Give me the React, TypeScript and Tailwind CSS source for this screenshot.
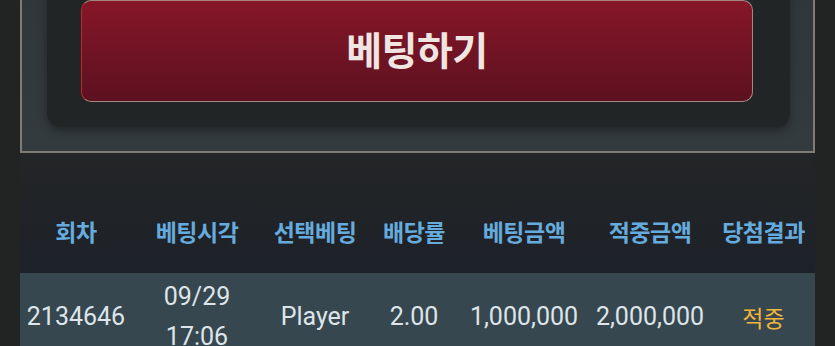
import React from "react";

const cols = ["w-[112px]", "w-[130px]", "w-[106px]", "w-[92px]", "w-[128px]", "w-[124px]", "w-[103px]"];
const headers = ["회차", "베팅시각", "선택베팅", "배당률", "베팅금액", "적중금액", "당첨결과"];

export default function App() {
  return (
    <div className="min-h-[346px] w-[835px] overflow-hidden bg-[#222424]" style={{ fontFamily: "Roboto, 'Noto Sans CJK KR', sans-serif" }}>
      <div className="ml-[20px] mt-[-52px] w-[795px] border-2 border-[#7f7b75] bg-gradient-to-b from-[#2f363a] to-[#343b3f] pb-[24px] pl-[25px] pr-[23px] pt-[25px]">
        <div className="rounded-[14px] bg-[#212526] pb-[25px] pl-[34px] pr-[37px] pt-[25px] shadow-[0_4px_8px_rgba(0,0,0,0.35)]">
          <div className="flex h-[102px] items-center justify-center rounded-[10px] border border-[#a88680] border-l-[#c0262e] bg-gradient-to-b from-[#861628] to-[#5d1120]">
            <span className="mb-[6px] text-[39px] font-bold tracking-[-0.5px] text-[#efe6e2]" style={{ fontFamily: "'Noto Sans CJK KR', sans-serif" }}>
              베팅하기
            </span>
          </div>
        </div>
      </div>
      <div className="ml-[20px] w-[795px]">
        <div className="flex h-[120px] items-center bg-gradient-to-b from-[#232526] to-[#1d2229] pt-[36px]">
          {headers.map((h, i) => (
            <div key={h} className={`${cols[i]} whitespace-nowrap text-center text-[23px] font-bold tracking-[-0.5px] text-[#66abdd]`} style={{ fontFamily: "'Noto Sans CJK KR', sans-serif" }}>
              {h}
            </div>
          ))}
        </div>
        <div className="flex h-[88px] items-center bg-[#37474f] text-[25px] text-[#dde5ea]">
          <div className={`${cols[0]} text-center`}>2134646</div>
          <div className={`${cols[1]} text-center leading-[40px]`}>
            <div>09/29</div>
            <div>17:06</div>
          </div>
          <div className={`${cols[2]} text-center`}>Player</div>
          <div className={`${cols[3]} text-center`}>2.00</div>
          <div className={`${cols[4]} text-center`}>1,000,000</div>
          <div className={`${cols[5]} text-center`}>2,000,000</div>
          <div className={`${cols[6]} text-center text-[23px] text-[#f0b53a]`} style={{ fontFamily: "'Noto Sans CJK KR', sans-serif" }}>
            적중
          </div>
        </div>
      </div>
    </div>
  );
}
